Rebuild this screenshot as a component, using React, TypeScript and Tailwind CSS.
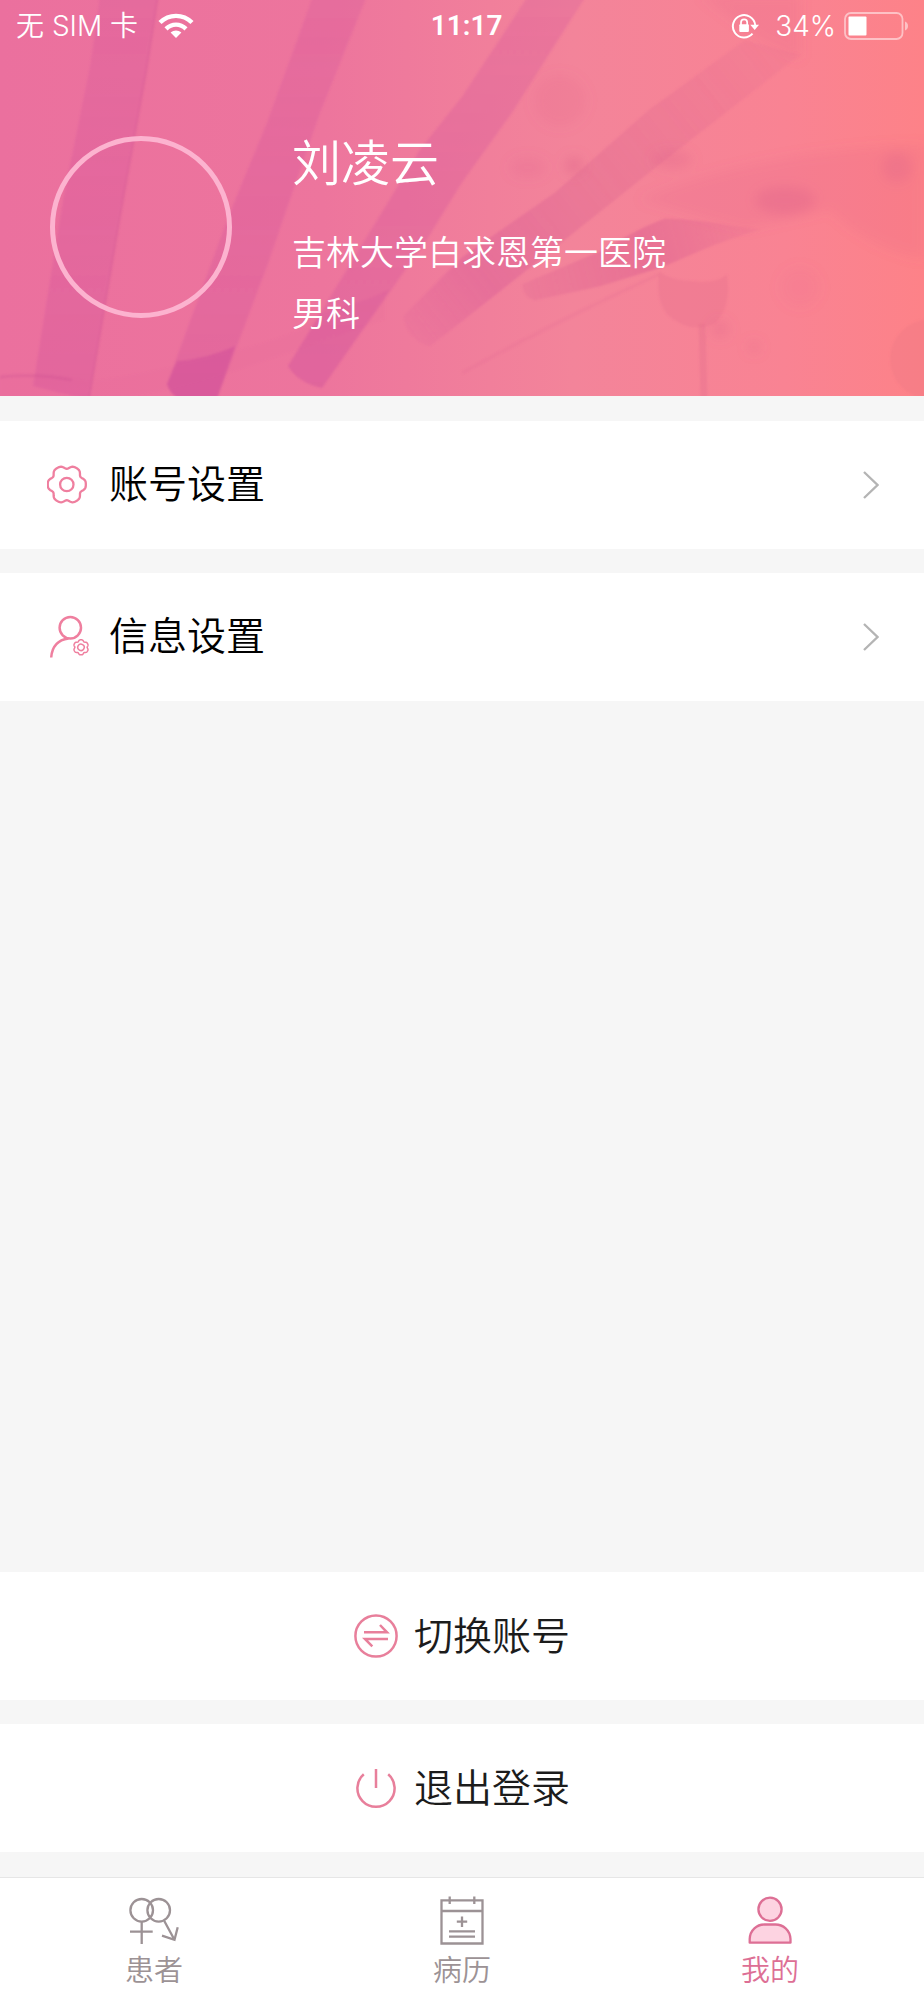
import React from 'react';

type IconProps = { className?: string };

// Six-lobed gear outline around (cx, cy)
const gearPath = (cx: number, cy: number, radius: number, depth: number) => {
  const points: string[] = [];
  for (let deg = 0; deg < 360; deg += 3) {
    const a = (deg * Math.PI) / 180;
    const r = radius + depth * Math.cos(6 * a) - depth * 0.28 * Math.cos(12 * a);
    points.push(`${(cx + r * Math.cos(a)).toFixed(2)} ${(cy + r * Math.sin(a)).toFixed(2)}`);
  }
  return `M${points.join('L')}Z`;
};

const GearIcon: React.FC<IconProps> = ({ className }) => (
  <svg viewBox="0 0 42 44" fill="none" stroke="currentColor" strokeWidth="2.3" strokeLinejoin="round" className={className} aria-hidden="true">
    <path d={gearPath(19.8, 21.5, 17.8, 1.7)} />
    <circle cx="19.8" cy="21.5" r="6.7" />
  </svg>
);

const UserGearIcon: React.FC<IconProps> = ({ className }) => (
  <svg viewBox="0 0 42 44" fill="none" stroke="currentColor" strokeWidth="2.5" className={className} aria-hidden="true">
    <circle cx="23.3" cy="12.7" r="10.7" />
    <path d="M21.5 23.6C11 25 5 32 4.2 42.5" />
    <g transform="rotate(30 34 32.3)" strokeWidth="1.5">
      <path d={gearPath(34, 32.3, 7, 0.7)} />
      <circle cx="34" cy="32.3" r="3.2" />
    </g>
  </svg>
);

const SwapIcon: React.FC<IconProps> = ({ className }) => (
  <svg viewBox="0 0 44 44" fill="none" stroke="currentColor" strokeWidth="2.5" className={className} aria-hidden="true">
    <circle cx="22" cy="22" r="20.6" />
    <path d="M10 18.3H33L26 11M34 25H11L18.3 32.3" />
  </svg>
);

const PowerIcon: React.FC<IconProps> = ({ className }) => (
  <svg viewBox="0 0 44 44" fill="none" stroke="currentColor" strokeWidth="2.5" className={className} aria-hidden="true">
    <path d="M9.8 8.2A18.6 18.6 0 1 0 34.2 8.2M22 3V22" />
  </svg>
);

const ChevronIcon: React.FC<IconProps> = ({ className }) => (
  <svg viewBox="0 0 16 28" fill="none" stroke="currentColor" strokeWidth="2.3" className={className} aria-hidden="true">
    <path d="M1 1L14.5 14L1 27" />
  </svg>
);

const PatientsIcon: React.FC<IconProps> = ({ className }) => (
  <svg viewBox="0 0 50 50" fill="none" stroke="currentColor" strokeWidth="2.3" className={className} aria-hidden="true">
    <circle cx="12.7" cy="14.3" r="11.3" />
    <circle cx="29.7" cy="14.3" r="11.3" />
    <path d="M12.7 26V48M1 35.7H23.7M35.3 25L45.3 43.5M48.7 31.3L45.5 43.8L33 39.7" />
  </svg>
);

const RecordsIcon: React.FC<IconProps> = ({ className }) => (
  <svg viewBox="0 0 50 50" fill="none" stroke="currentColor" strokeWidth="2.3" className={className} aria-hidden="true">
    <path d="M4.5 4.3H45.5V47.5H4.5ZM4.5 15H45.5M12.7 0.5V8M37.3 0.5V8" />
    <path d="M25 20.5V31M19.8 25.7H30.2M12 35.3H38M12 40.7H38" />
  </svg>
);

const MineIcon: React.FC<IconProps> = ({ className }) => (
  <svg viewBox="0 0 50 50" fill="#fdd3e1" stroke="currentColor" strokeWidth="2.3" strokeLinejoin="round" className={className} aria-hidden="true">
    <circle cx="25" cy="13.3" r="11.6" />
    <path d="M4.7 46.7V43C5 34 12 28.5 19.5 28.5H30.5C38 28.5 45 34 45.5 43V46.7Z" />
  </svg>
);

const WifiIcon: React.FC<IconProps> = ({ className }) => (
  <svg viewBox="0 0 36 26" fill="none" stroke="currentColor" strokeWidth="4.4" className={className} aria-hidden="true">
    <path d="M2 9.5C11 0.6 25 0.6 34 9.5M8 15.8C13.8 10.2 22.2 10.2 28 15.8" />
    <path d="M18 25L12.6 19.6C15.7 16.8 20.3 16.8 23.4 19.6Z" fill="currentColor" stroke="none" />
  </svg>
);

const RotationLockIcon: React.FC<IconProps> = ({ className }) => (
  <svg viewBox="0 0 28 26" fill="none" stroke="currentColor" strokeWidth="2" className={className} aria-hidden="true">
    <path d="M21.5 20.7A11.2 11.2 0 1 1 24.2 12" />
    <path d="M19.3 11.8H28L23.7 17Z" fill="currentColor" stroke="none" />
    <rect x="8.3" y="11.3" width="9.6" height="7.6" rx="1" fill="currentColor" stroke="none" />
    <path d="M10 12V9.5A3.1 3.1 0 0 1 16.2 9.5V12" strokeWidth="1.7" />
  </svg>
);

const BatteryIcon: React.FC<IconProps> = ({ className }) => (
  <svg viewBox="0 0 66 28" fill="none" className={className} aria-hidden="true">
    <rect x="1" y="1" width="57.5" height="26" rx="6" stroke="#ffffff" strokeOpacity="0.5" strokeWidth="1.8" />
    <rect x="4.5" y="4.5" width="18" height="19" rx="1" fill="#ffffff" />
    <path d="M61 9.5C65 11 65 17 61 18.5Z" fill="#ffffff" fillOpacity="0.5" />
  </svg>
);

// Tinted test tubes and droplets behind the profile
const HeaderArt: React.FC = () => (
  <svg viewBox="0 0 924 397" preserveAspectRatio="none" className="absolute inset-0 w-full h-full" aria-hidden="true">
    <defs>
      <linearGradient id="base" x1="0" y1="0" x2="1" y2="0">
        <stop offset="0" stopColor="#eb709e" />
        <stop offset="0.35" stopColor="#ed759d" />
        <stop offset="0.62" stopColor="#f3849a" />
        <stop offset="0.85" stopColor="#f98393" />
        <stop offset="1" stopColor="#fd8288" />
      </linearGradient>
      <linearGradient id="tube" x1="0" y1="0" x2="0" y2="1">
        <stop offset="0" stopColor="#d4559c" stopOpacity="0.28" />
        <stop offset="1" stopColor="#d4559c" stopOpacity="0.36" />
      </linearGradient>
      <linearGradient id="farTube" gradientUnits="userSpaceOnUse" x1="790" y1="40" x2="410" y2="340">
        <stop offset="0" stopColor="#d9608e" stopOpacity="0.12" />
        <stop offset="0.5" stopColor="#d9608e" stopOpacity="0.3" />
        <stop offset="0.8" stopColor="#d75896" stopOpacity="0.4" />
        <stop offset="1" stopColor="#d75896" stopOpacity="0.12" />
      </linearGradient>
      <linearGradient id="leaf" gradientUnits="userSpaceOnUse" x1="522" y1="290" x2="770" y2="225">
        <stop offset="0" stopColor="#dc5f90" stopOpacity="0.22" />
        <stop offset="0.5" stopColor="#dc5f90" stopOpacity="0.5" />
        <stop offset="1" stopColor="#dc5f90" stopOpacity="0.1" />
      </linearGradient>
      <filter id="soft" x="-50%" y="-50%" width="200%" height="200%">
        <feGaussianBlur stdDeviation="6" />
      </filter>
      <filter id="edge" x="-5%" y="-5%" width="110%" height="110%">
        <feGaussianBlur stdDeviation="1" />
      </filter>
    </defs>
    <rect width="924" height="397" fill="url(#base)" />
    <g filter="url(#edge)">
      <path d="M100 -4L90 67L63 200L33 387Q58 394 89 400L120 217L147 67L158 -4Z" fill="url(#tube)" />
      <path d="M158 -4L147 67L120 217L89 400" fill="none" stroke="#c94a8f" strokeOpacity="0.25" strokeWidth="2" />
      <path d="M313 -4L267 123L230 213L167 385Q170 396 180 400H217L267 267L320 113L367 -4Z" fill="url(#tube)" />
      <path d="M177 362Q205 360 235 347L217 400H180Q170 396 167 385Z" fill="#cf4b98" fillOpacity="0.45" />
      <path d="M528 -4L462 97L420 150L333 293L288 367Q298 384 322 389L427 240L462 183L512 113L586 -4Z" fill="url(#tube)" />
      <path d="M350 305Q372 300 390 290L322 389Q298 384 288 367L320 315Z" fill="#d4549a" fillOpacity="0.2" />
      <path d="M745 40L649 110L555 193L462 258L403 317Q408 342 430 347L462 322L519 277L662 163L800 55Z" fill="url(#farTube)" />
      <path d="M522 285Q524 299 535 301L600 287L662 268L715 245L760 230L730 226Q700 220 665 219Q640 228 600 252Z" fill="url(#leaf)" />
      <path d="M462 374Q560 320 659 275" fill="none" stroke="#d75e90" strokeOpacity="0.15" strokeWidth="3" />
      <path d="M0 378Q45 374 90 382Q150 376 234 352Q300 335 330 315L385 292V320Q300 350 240 370Q150 400 90 400H0Z" fill="#df5c9a" fillOpacity="0.08" />
      <path d="M0 378Q35 374 72 381" fill="none" stroke="#c94a8f" strokeOpacity="0.25" strokeWidth="3" />
      <path d="M659 272Q655 300 667 315Q690 336 715 324Q732 308 727 275Q718 284 694 282Q672 282 659 272Z" fill="#dc6288" fillOpacity="0.2" />
      <path d="M702 325L704 400" stroke="#dc6288" strokeOpacity="0.25" strokeWidth="7" />
      <circle cx="930" cy="360" r="40" fill="#e2707f" fillOpacity="0.22" />
    </g>
    <g filter="url(#soft)" fill="#dd6088">
      <circle cx="560" cy="101" r="26" fillOpacity="0.16" />
      <ellipse cx="528" cy="168" rx="18" ry="10" fillOpacity="0.18" />
      <circle cx="574" cy="166" r="9" fillOpacity="0.4" />
      <ellipse cx="672" cy="160" rx="20" ry="9" fillOpacity="0.25" />
      <ellipse cx="785" cy="201" rx="30" ry="14" fillOpacity="0.35" />
      <path d="M640 200Q760 150 924 145V260Q870 250 830 210L745 230Z" fillOpacity="0.15" />
      <path d="M700 -5H800V60L760 40Z" fillOpacity="0.15" />
      <circle cx="897" cy="168" r="15" fillOpacity="0.25" />
      <circle cx="800" cy="288" r="20" fillOpacity="0.1" />
      <circle cx="720" cy="330" r="9" fillOpacity="0.25" />
      <circle cx="754" cy="348" r="6" fillOpacity="0.25" />
    </g>
  </svg>
);

const settings = [
  { id: 'account', label: '账号设置', Icon: GearIcon },
  { id: 'info', label: '信息设置', Icon: UserGearIcon },
];

const actions = [
  { id: 'switch', label: '切换账号', Icon: SwapIcon },
  { id: 'logout', label: '退出登录', Icon: PowerIcon },
];

const tabs = [
  { id: 'patients', label: '患者', Icon: PatientsIcon, active: false },
  { id: 'records', label: '病历', Icon: RecordsIcon, active: false },
  { id: 'mine', label: '我的', Icon: MineIcon, active: true },
];

const App: React.FC = () => {
  return (
    <div className="min-h-screen flex flex-col bg-[#f6f6f6] font-[Inter,'Noto_Sans_CJK_SC',sans-serif] font-[350]">
      {/* Header */}
      <header className="relative overflow-hidden text-white">
        <HeaderArt />
        <div className="relative">
          <div className="h-[52px] pl-4 pr-[14px] flex items-center justify-between text-[28px] leading-[48px]">
            <div className="flex items-center gap-5">
              <span>无 SIM 卡</span>
              <WifiIcon className="w-[36px] h-[26px]" />
            </div>
            <span className="ml-2 font-[Roboto,sans-serif] font-semibold">11:17</span>
            <div className="flex items-center">
              <RotationLockIcon className="w-[28px] h-[26px]" />
              <span className="ml-4 mr-2">34%</span>
              <BatteryIcon className="w-[66px] h-[28px]" />
            </div>
          </div>

          <div className="pt-[84px] pb-[60px] pl-[50px] pr-6 flex items-start gap-[60px]">
            <div className="w-[182px] h-[182px] shrink-0 rounded-full border-[5px] border-[#fcb3cf]" />
            <div>
              <h1 className="text-[49px] leading-[56px]">刘凌云</h1>
              <p className="mt-[39px] text-[34px] leading-[44px]">吉林大学白求恩第一医院</p>
              <p className="mt-[17px] text-[34px] leading-[44px]">男科</p>
            </div>
          </div>
        </div>
      </header>

      {/* Settings */}
      <main className="flex-1 flex flex-col justify-between pt-[25px] pb-[25px]">
        <div className="flex flex-col gap-6">
          {settings.map(({ id, label, Icon }) => (
            <button key={id} type="button" className="w-full h-[128px] pl-[47px] pr-[45px] flex items-center bg-white text-black">
              <Icon className="w-[42px] h-[44px] text-[#ef7f9f]" />
              <span className="ml-5 pb-[2px] text-[39px] leading-[48px]">{label}</span>
              <ChevronIcon className="ml-auto w-[16px] h-[28px] text-[#b4b4b4]" />
            </button>
          ))}
        </div>

        <div className="flex flex-col gap-6">
          {actions.map(({ id, label, Icon }) => (
            <button key={id} type="button" className="w-full h-[128px] flex items-center justify-center gap-4 bg-white text-[#1c1c1c]">
              <Icon className="w-[44px] h-[44px] text-[#e87f9b]" />
              <span className="text-[39px] leading-[48px]">{label}</span>
            </button>
          ))}
        </div>
      </main>

      {/* Tab bar */}
      <nav className="grid grid-cols-3 bg-white border-t border-[#e6e6e6]">
        {tabs.map(({ id, label, Icon, active }) => (
          <a
            key={id}
            href={`#${id}`}
            aria-current={active ? 'page' : undefined}
            className={`pt-[18px] pb-3 flex flex-col items-center gap-2 ${active ? 'text-[#dd6f95]' : 'text-[#9c9295]'}`}
          >
            <Icon className="w-[50px] h-[50px]" />
            <span className="text-[29px] leading-[34px]">{label}</span>
          </a>
        ))}
      </nav>
    </div>
  );
};

export default App;
